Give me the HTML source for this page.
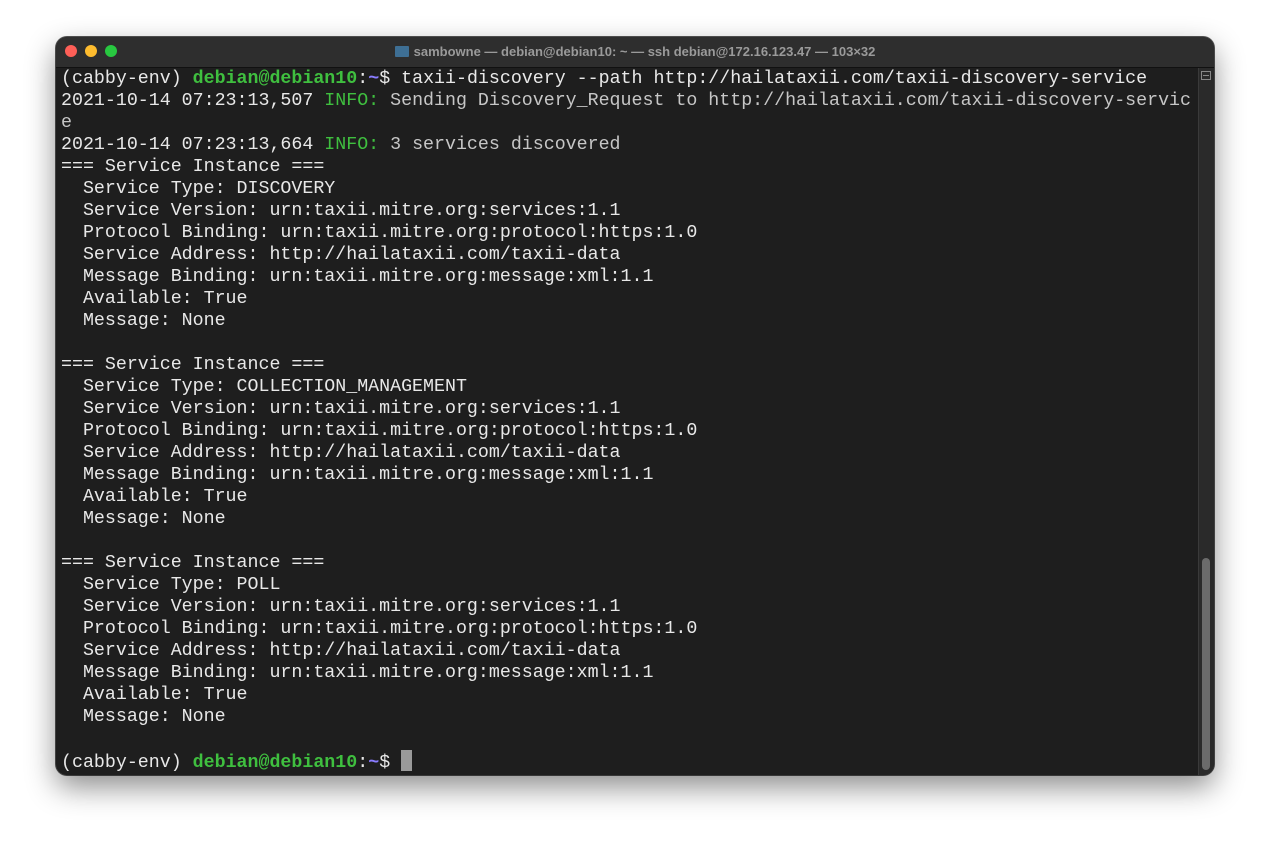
<!DOCTYPE html>
<html><head><style>
body{margin:0;width:1270px;height:849px;background:#fff;position:relative;overflow:hidden}
.win{position:absolute;left:56px;top:37px;width:1158px;height:738px;border-radius:11px;background:#1e1e1e;box-shadow:0 12px 30px rgba(0,0,0,.45),0 0 0 1px #555;overflow:hidden}
.tb{position:absolute;left:0;top:0;width:100%;height:30px;background:#2e2e2e;border-bottom:1px solid #111}
.dot{position:absolute;top:8px;width:12px;height:12px;border-radius:50%}
.title{position:absolute;top:0;left:0;width:100%;text-align:center;font:bold 13px "Liberation Sans",sans-serif;line-height:29px;color:#9a9a9a}
.fold{display:inline-block;width:14px;height:11px;background:#3e6f94;vertical-align:-1px;margin-right:5px;border-radius:1px}
.sb{position:absolute;right:0;top:31px;width:15px;bottom:0;background:#2a2a2a;border-left:1px solid #3a3a3a}
.thumb{position:absolute;left:3px;top:490px;width:8px;height:212px;border-radius:4px;background:#6b6b6b}
pre{position:absolute;left:5px;top:31px;margin:0;font:18.3px/22px "Liberation Mono",monospace;color:#e8e8e8}
.g{color:#3fbf3f;font-weight:bold}.p{color:#8a7cff;font-weight:bold}.i{color:#3fbf3f}.l{color:#c6c6c6}
.cur{display:inline-block;width:11px;height:21px;background:#9a9a9a;vertical-align:-4px}
</style></head><body>
<div class="win">
<div class="tb">
<div class="dot" style="left:9px;background:#fe5f57"></div>
<div class="dot" style="left:29px;background:#febc2e"></div>
<div class="dot" style="left:49px;background:#28c840"></div>
<div class="title"><span class="fold"></span>sambowne — debian@debian10: ~ — ssh debian@172.16.123.47 — 103×32</div>
</div>
<div class="sb"><div style="position:absolute;left:2px;top:3px;width:10px;height:9px;border:1px solid #888;box-sizing:border-box"><div style="position:absolute;left:1px;right:1px;top:3px;height:1px;background:#888"></div></div><div class="thumb"></div></div>
<pre>(cabby-env) <span class="g">debian@debian10</span>:<span class="p">~</span>$ taxii-discovery --path http://hailataxii.com/taxii-discovery-service
2021-10-14 07:23:13,507 <span class="i">INFO:</span> <span class="l">Sending Discovery_Request to http://hailataxii.com/taxii-discovery-servic
e</span>
2021-10-14 07:23:13,664 <span class="i">INFO:</span> <span class="l">3 services discovered</span>
=== Service Instance ===
  Service Type: DISCOVERY
  Service Version: urn:taxii.mitre.org:services:1.1
  Protocol Binding: urn:taxii.mitre.org:protocol:https:1.0
  Service Address: http://hailataxii.com/taxii-data
  Message Binding: urn:taxii.mitre.org:message:xml:1.1
  Available: True
  Message: None

=== Service Instance ===
  Service Type: COLLECTION_MANAGEMENT
  Service Version: urn:taxii.mitre.org:services:1.1
  Protocol Binding: urn:taxii.mitre.org:protocol:https:1.0
  Service Address: http://hailataxii.com/taxii-data
  Message Binding: urn:taxii.mitre.org:message:xml:1.1
  Available: True
  Message: None

=== Service Instance ===
  Service Type: POLL
  Service Version: urn:taxii.mitre.org:services:1.1
  Protocol Binding: urn:taxii.mitre.org:protocol:https:1.0
  Service Address: http://hailataxii.com/taxii-data
  Message Binding: urn:taxii.mitre.org:message:xml:1.1
  Available: True
  Message: None

(cabby-env) <span class="g">debian@debian10</span>:<span class="p">~</span>$ <span class="cur"></span></pre>
</div>
</body></html>
